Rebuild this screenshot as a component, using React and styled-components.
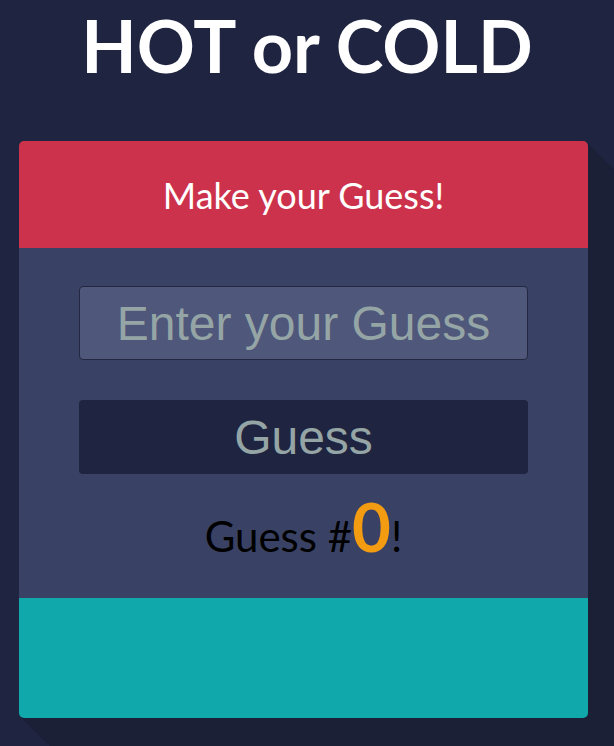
import React, { useState } from 'react';
import styled, { createGlobalStyle } from 'styled-components';

const longShadow = Array.from({ length: 160 }, (_, i) => `${i + 1}px ${i + 1}px 0 #1c2037`).join(', ');

const GlobalStyle = createGlobalStyle`
    html, body {
        margin: 0;
        padding: 0;
        background: #1f2440;
        overflow: hidden;
    }
    body {
        font-family: Lato, "Liberation Sans", sans-serif;
    }
`;

const Page = styled.div`
    width: 614px;
    height: 746px;
    display: flex;
    flex-direction: column;
    align-items: center;
    overflow: hidden;
`;

const Title = styled.h1`
    margin: 0 0 52px;
    padding-top: 2px;
    height: 87px;
    font-family: Lato, sans-serif;
    font-weight: 700;
    font-size: 72px;
    line-height: normal;
    color: #fff;
`;

const Card = styled.div`
    width: 569px;
    margin-right: 7px;
    border-radius: 5px;
    box-shadow: ${longShadow};
    display: flex;
    flex-direction: column;
`;

const Header = styled.div`
    background: #cc324b;
    border-radius: 5px 5px 0 0;
    padding: 32px 0 32px;
    text-align: center;
    color: #fff;
    font-size: 36px;
    line-height: normal;
    height: 107px;
    box-sizing: border-box;
`;

const Body = styled.div`
    background: #394264;
    padding: 38px 60px 32px;
    display: flex;
    flex-direction: column;
    align-items: stretch;
`;

const GuessInput = styled.input`
    height: 74px;
    box-sizing: border-box;
    background: #4f577a;
    border: 1px solid #232840;
    border-radius: 4px;
    font-family: "Liberation Sans", Arial, sans-serif;
    font-size: 48px;
    text-align: center;
    color: #fff;
    outline: none;
    &::placeholder {
        color: #95a5a6;
    }
`;

const GuessButton = styled.button`
    margin-top: 40px;
    height: 74px;
    border: none;
    border-radius: 4px;
    background: #1f2440;
    color: #95a5a6;
    font-family: "Liberation Sans", Arial, sans-serif;
    font-size: 48px;
    cursor: pointer;
`;

const Counter = styled.p`
    margin: 12px 0 0;
    text-align: center;
    font-size: 42px;
    line-height: normal;
    color: #000;
`;

const Count = styled.span`
    color: #f39c12;
    font-weight: 700;
    font-size: 67px;
`;

const Feedback = styled.div`
    background: #11a8ab;
    height: 120px;
    border-radius: 0 0 5px 5px;
`;

export default function App() {
    const [count] = useState(0);
    return (
        <Page>
            <GlobalStyle />
            <Title>HOT or COLD</Title>
            <Card>
                <Header>Make your Guess!</Header>
                <Body>
                    <GuessInput type="text" placeholder="Enter your Guess" />
                    <GuessButton>Guess</GuessButton>
                    <Counter>
                        Guess #<Count>{ count }</Count>!
                    </Counter>
                </Body>
                <Feedback />
            </Card>
        </Page>
    );
}
